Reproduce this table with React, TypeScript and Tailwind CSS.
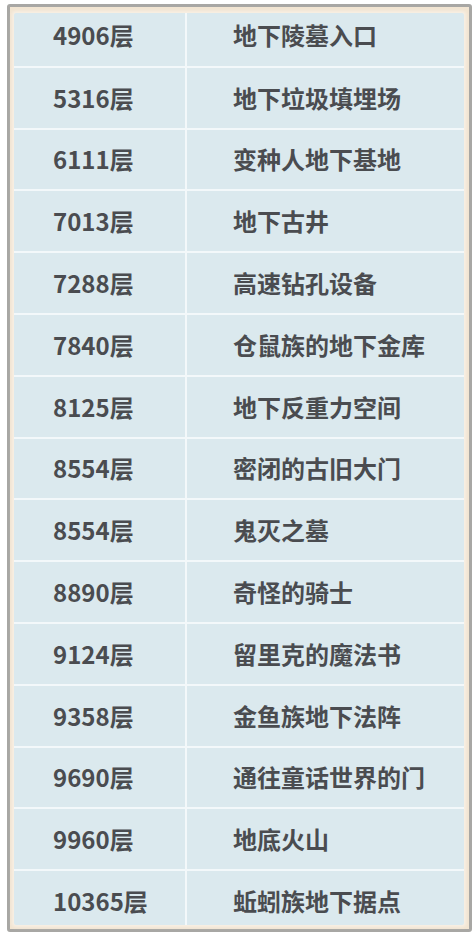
const rows: [string, string][] = [
  ["4906层", "地下陵墓入口"],
  ["5316层", "地下垃圾填埋场"],
  ["6111层", "变种人地下基地"],
  ["7013层", "地下古井"],
  ["7288层", "高速钻孔设备"],
  ["7840层", "仓鼠族的地下金库"],
  ["8125层", "地下反重力空间"],
  ["8554层", "密闭的古旧大门"],
  ["8554层", "鬼灭之墓"],
  ["8890层", "奇怪的骑士"],
  ["9124层", "留里克的魔法书"],
  ["9358层", "金鱼族地下法阵"],
  ["9690层", "通往童话世界的门"],
  ["9960层", "地底火山"],
  ["10365层", "蚯蚓族地下据点"],
]

function Row({ floor, place, first }: { floor: string; place: string; first: boolean }) {
  return (
    <div className={`flex h-[61.8px] shrink-0 ${first ? "" : "border-t-2 border-[#f3f8fa]"}`}>
      <div className="flex w-[171px] items-center pl-[39px]">{floor}</div>
      <div className="w-[2px] bg-[#f3f8fa]" />
      <div className="flex flex-1 items-center pl-[46px]">{place}</div>
    </div>
  )
}

export default function App() {
  return (
    <div className="h-[938px] w-[476px] bg-white pl-[7px] pt-[4px]">
      <div className="h-[928px] w-[465px] rounded-[3px] border-[3px] border-[#a8a7a4] bg-[#f2e5d2] pb-[4px] pl-[4px] pr-[5px] pt-[6px]">
        <div className="h-full w-full overflow-hidden rounded-[2px] bg-[#dbe9ee] shadow-[0_0_3px_2px_#f7efe4]">
          <div
            className="-mt-[9px] flex flex-col text-[24px] font-bold leading-none text-[#4a4c50]"
            style={{ fontFamily: '"Noto Sans CJK SC", "Noto Sans", sans-serif' }}
          >
            {rows.map(([f, p], i) => (
              <Row key={i} floor={f} place={p} first={i === 0} />
            ))}
          </div>
        </div>
      </div>
    </div>
  )
}
